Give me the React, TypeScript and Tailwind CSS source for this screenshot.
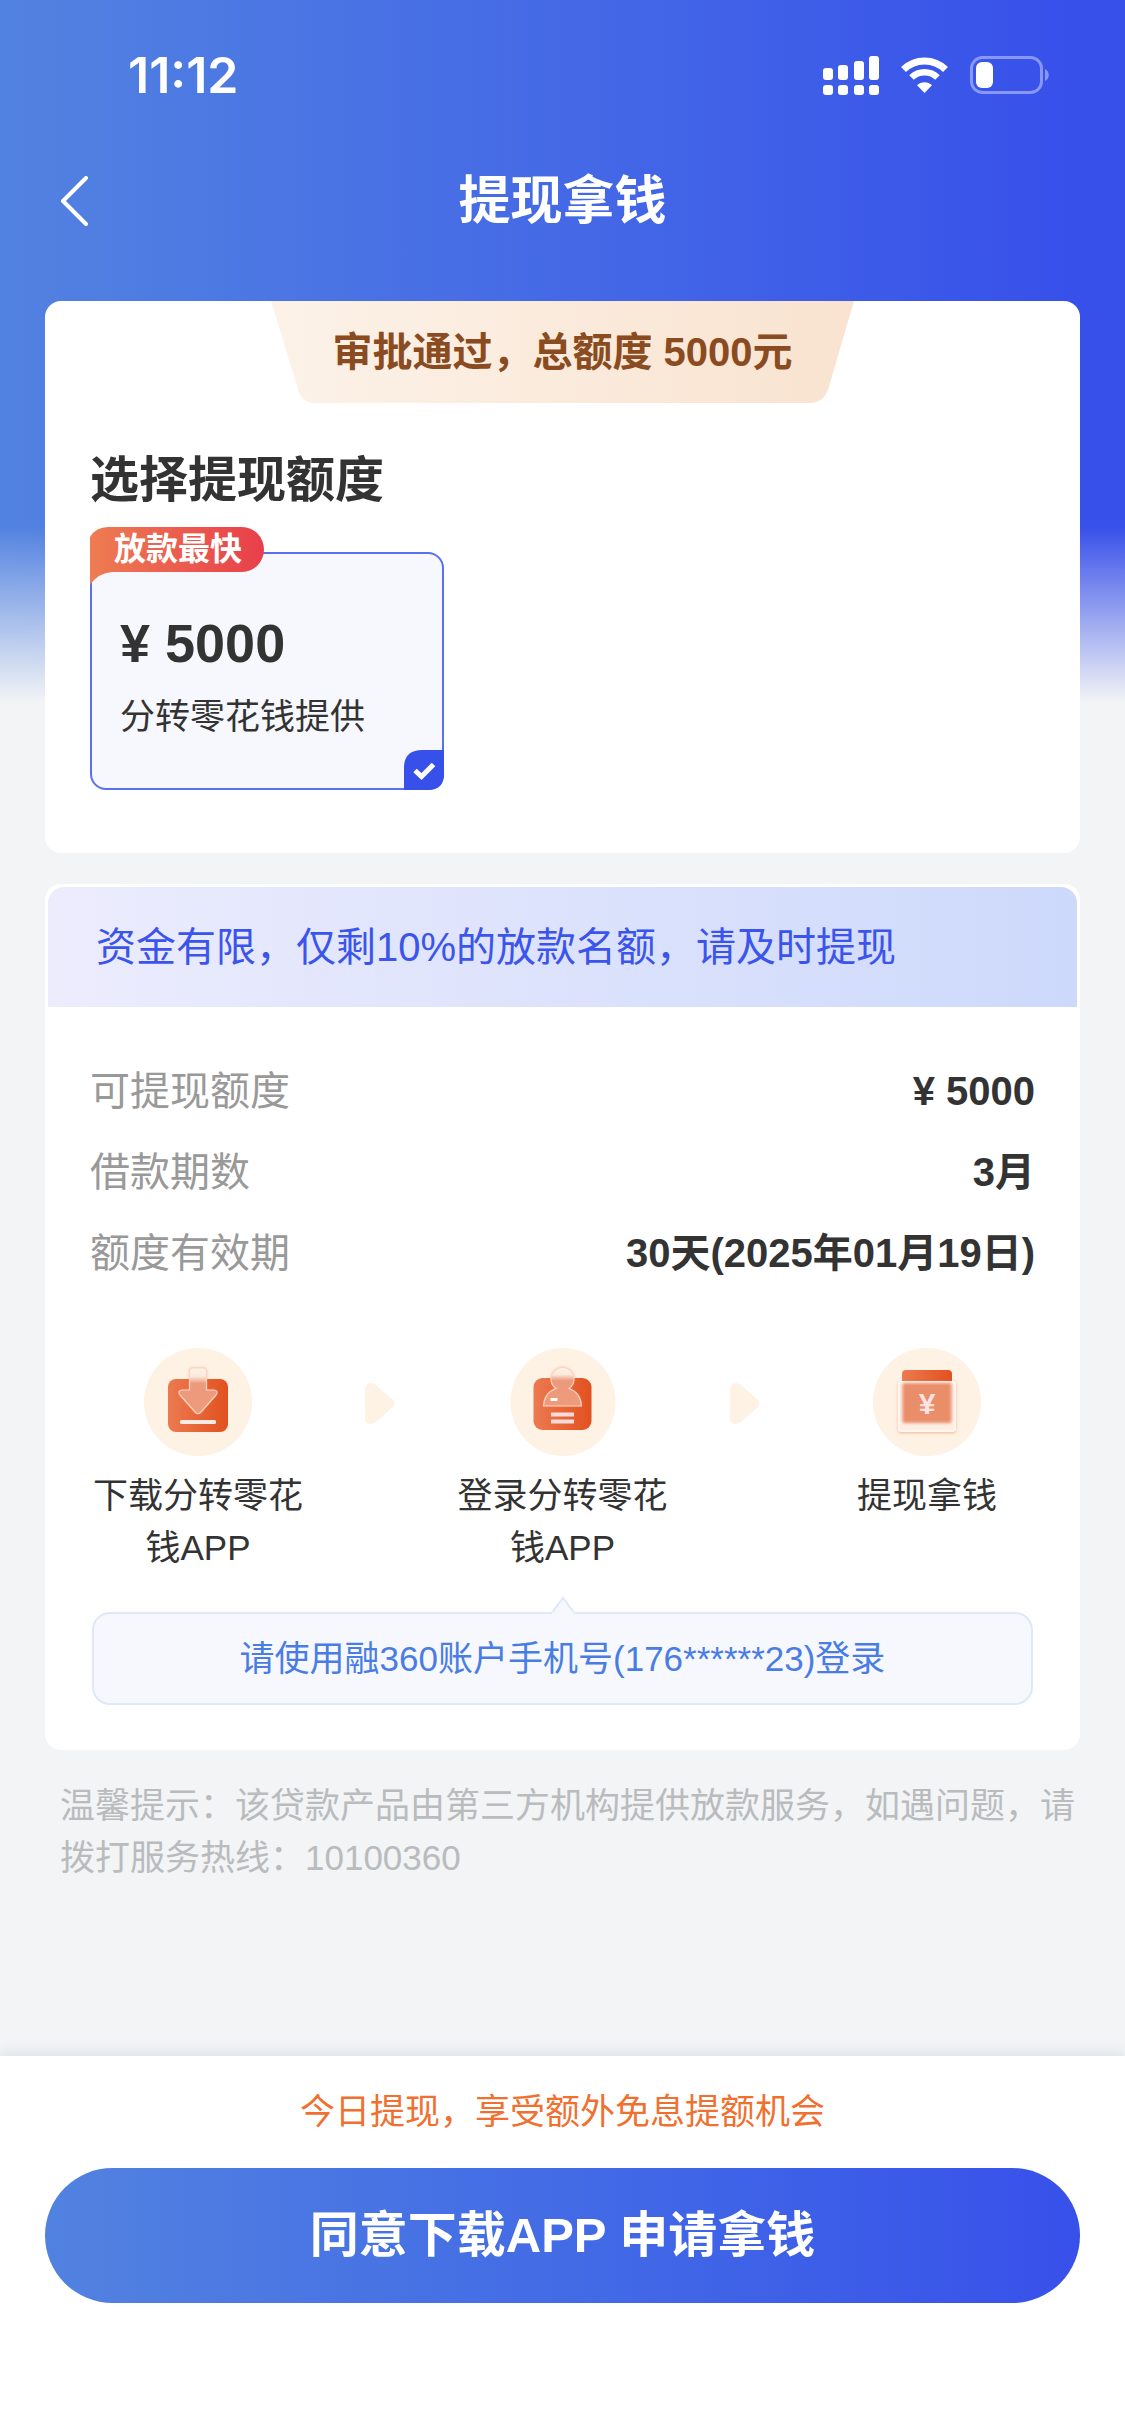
import { useState } from "react";
import { twMerge } from "tailwind-merge";

const details = [
  { label: "可提现额度", value: "¥ 5000" },
  { label: "借款期数", value: "3月" },
  { label: "额度有效期", value: "30天(2025年01月19日)" },
];

const SignalIcon = () => (
  <svg width="56" height="39" viewBox="0 0 56 39" fill="#fff">
    <rect x="0" y="12" width="10" height="12" rx="3" />
    <rect x="15" y="9" width="10" height="15" rx="3" />
    <rect x="31" y="5" width="10" height="19" rx="3" />
    <rect x="46" y="0" width="10" height="24" rx="3" />
    <rect x="0" y="29" width="10" height="10" rx="3" />
    <rect x="15" y="29" width="10" height="10" rx="3" />
    <rect x="31" y="29" width="10" height="10" rx="3" />
    <rect x="46" y="29" width="10" height="10" rx="3" />
  </svg>
);

const WifiIcon = () => (
  <svg width="49" height="36" viewBox="0 0 49 36">
    <path d="M3.5 12.5a30 30 0 0 1 42 0" fill="none" stroke="#fff" strokeWidth="7" />
    <path d="M11.5 20.5a18.5 18.5 0 0 1 26 0" fill="none" stroke="#fff" strokeWidth="6.5" />
    <path d="M17 28.3a10.6 10.6 0 0 1 15 0L24.5 36Z" fill="#fff" />
  </svg>
);

const BatteryIcon = () => (
  <svg width="80" height="38" viewBox="0 0 80 38">
    <rect x="1.5" y="1.5" width="70" height="35" rx="11" fill="none" stroke="#fff" strokeOpacity=".4" strokeWidth="3" />
    <rect x="6" y="6" width="17" height="26" rx="6" fill="#fff" />
    <path d="M75 13c5 2 5 10 0 12Z" fill="#fff" fillOpacity=".4" />
  </svg>
);

const IconDefs = () => (
  <svg width="0" height="0" className="absolute" aria-hidden="true">
    <defs>
      <linearGradient id="orange" x1="0" y1="0" x2="1" y2="0">
        <stop offset="0" stopColor="#ec7a50" />
        <stop offset="1" stopColor="#e2511f" />
      </linearGradient>
      <linearGradient id="glass" x1="0" y1="0" x2="0" y2="1">
        <stop offset="0" stopColor="#fdf3e6" />
        <stop offset=".18" stopColor="#fbeadd" />
        <stop offset=".34" stopColor="#ec9a7c" />
        <stop offset="1" stopColor="#ee9b7b" />
      </linearGradient>
      <filter id="soft" x="-20%" y="-20%" width="140%" height="140%">
        <feGaussianBlur stdDeviation="1.5" />
      </filter>
    </defs>
  </svg>
);

const DownloadIcon = () => {
  const arrow =
    "M48.500 20H59.500Q62.500 20 62.500 23V42H70Q75 43 72 47L57 64Q54 67.500 51 64L36 47Q33 43 38 42H45.500V23Q45.500 20 48.500 20Z";
  return (
    <svg width="108" height="108" viewBox="0 0 108 108">
      <circle cx="54" cy="54" r="54" fill="#fdf2e4" />
      <rect x="24" y="31" width="60" height="53" rx="8" fill="url(#orange)" />
      <path d={arrow} fill="#f08a68" opacity=".6" filter="url(#soft)" />
      <path d={arrow} fill="url(#glass)" stroke="#fbd3c3" strokeWidth="1.200" />
      <rect x="36" y="72" width="36" height="4" rx="1.500" fill="#fdeae4" />
    </svg>
  );
};

const LoginIcon = () => {
  const person =
    "M47 40.500A11.500 11.500 0 1 1 60 40.500C67 43 72 49 72.500 58H34.500C35 49 40 43 47 40.500Z";
  return (
    <svg width="108" height="108" viewBox="0 0 108 108">
      <ellipse cx="54" cy="54" rx="52.500" ry="54" fill="#fdf2e4" />
      <rect x="24.500" y="30" width="58" height="52" rx="9" fill="url(#orange)" />
      <path d={person} fill="#f08a68" opacity=".6" filter="url(#soft)" />
      <path d={person} fill="url(#glass)" stroke="#fbd3c3" strokeWidth="1.200" />
      <rect x="41.500" y="50" width="7" height="3" rx=".5" fill="#fff" />
      <rect x="42" y="64.500" width="23" height="4" rx=".5" fill="#fbdbdc" />
      <rect x="42" y="71.500" width="23" height="4" rx=".5" fill="#fbdbdc" />
    </svg>
  );
};

const CashIcon = () => (
  <svg width="108" height="108" viewBox="0 0 108 108">
    <circle cx="54" cy="54" r="54" fill="#fdf2e4" />
    <path d="M29 34V26Q29 22 33 22H75Q79 22 79 26V34Z" fill="url(#orange)" />
    <rect x="25" y="34" width="58" height="51" rx="3" fill="#f08a68" opacity=".6" filter="url(#soft)" />
    <rect x="26" y="34" width="56" height="49" rx="2" fill="#fdeee4" stroke="#fff6f0" strokeWidth="2" />
    <rect x="29.500" y="35" width="49" height="40" rx="2" fill="#ea8e6a" filter="url(#soft)" />
    <text x="54" y="66" textAnchor="middle" fontSize="30" fontWeight="700" fill="#fde3e3" fontFamily="Liberation Sans, sans-serif">
      ¥
    </text>
  </svg>
);

const StepArrow = () => (
  <svg className="mt-[35px] shrink-0" width="30" height="41" viewBox="0 0 30 41">
    <path d="M0 6Q0 0 6 0Q9 0 12 3L28 17Q31 20.500 28 24L12 38Q9 41 6 41Q0 41 0 35Z" fill="#fdf2e4" />
  </svg>
);

const Step = ({ icon, title }: { icon: React.ReactNode; title: string }) => (
  <li className="flex w-[216px] flex-col items-center">
    {icon}
    <span className="mt-[14px] text-center text-[35px] leading-[52px]">
      {title}
    </span>
  </li>
);

const App = () => {
  const [selected, setSelected] = useState(true);

  return (
    <div className="relative isolate flex min-h-screen flex-col bg-[#f2f4f6] font-['Liberation_Sans','Noto_Sans_CJK_SC',sans-serif] text-[#333]">
      <IconDefs />
      <div className="absolute inset-x-0 top-0 -z-10 h-[702px] bg-linear-to-r from-[#5282e0] via-[#4569e6] via-50% to-[#3850ea] to-95%">
        <div className="h-full bg-linear-to-b from-[#f2f4f6]/0 from-75% to-[#f2f4f6]" />
      </div>

      {/* Status bar */}
      <div className="flex h-[150px] items-center justify-between pr-[75px] pl-[128px] text-white">
        <span className="font-['Inter',sans-serif] text-[50px] font-semibold">
          11:12
        </span>
        <div className="flex items-center gap-[21px]">
          <SignalIcon />
          <WifiIcon />
          <BatteryIcon />
        </div>
      </div>

      <header className="grid h-[102px] grid-cols-[1fr_auto_1fr] items-center px-[59px] text-white">
        <button type="button" aria-label="返回" className="w-fit">
          <svg width="30" height="50" viewBox="0 0 30 50">
            <path d="M27 2L4 25L27 48" fill="none" stroke="#fff" strokeWidth="4" strokeLinecap="round" strokeLinejoin="round" />
          </svg>
        </button>
        <h1 className="text-[52px] font-bold">提现拿钱</h1>
      </header>

      <main className="px-[45px] pt-[49px]">
        <section className="rounded-2xl bg-white px-[45px] pb-[63px]">
          <div className="relative isolate mx-auto flex h-[102px] w-[583px] items-center justify-center">
            <svg className="absolute inset-0 -z-10 size-full" viewBox="0 0 583 101" preserveAspectRatio="none">
              <defs>
                <linearGradient id="ribbon">
                  <stop offset="0" stopColor="#fcf2e8" />
                  <stop offset="1" stopColor="#f9e3d0" />
                </linearGradient>
              </defs>
              <path d="M0 0H583L557 88Q552 101 540 101H43Q31 101 27 88Z" fill="url(#ribbon)" />
            </svg>
            <p className="text-[40px] font-bold text-[#8a4b20]">
              审批通过，总额度 5000元
            </p>
          </div>

          <h2 className="mt-[42px] text-[49px] leading-[70px] font-bold">
            选择提现额度
          </h2>

          <label className="relative mt-3 block w-fit pt-[25px]">
            <input
              type="radio"
              name="amount"
              className="sr-only"
              checked={selected}
              onChange={() => setSelected(true)}
            />
            <div
              className={twMerge(
                "w-[354px] rounded-2xl border-2 bg-[#f6f8fd] px-7 pt-[57px] pb-[45px]",
                selected && "border-[#5a70f2]"
              )}
            >
              <p className="text-[54px] leading-[64px] font-bold">¥ 5000</p>
              <p className="mt-4 text-[35px] leading-[52px]">分转零花钱提供</p>
            </div>
            <div className="absolute top-0 left-0 isolate h-[58px] w-[174px]">
              <svg className="absolute inset-0 -z-10" width="174" height="58" viewBox="0 0 174 58">
                <defs>
                  <linearGradient id="hot">
                    <stop offset="0" stopColor="#ee7c52" />
                    <stop offset="1" stopColor="#e83f4b" />
                  </linearGradient>
                </defs>
                <path d="M0 10Q6 0 18 0H152A22 22.500 0 0 1 152 45H22Q8 46 0 58Z" fill="url(#hot)" />
              </svg>
              <span className="block pl-6 text-[32px] leading-[45px] font-bold text-white">
                放款最快
              </span>
            </div>
            {selected && (
              <svg className="absolute right-0 bottom-0" width="40" height="40" viewBox="0 0 40 40">
                <path d="M0 18Q0 0 18 0H40V24Q40 40 24 40H0Z" fill="#3850ea" />
                <path d="M11 20.500L17.500 26.500L29.500 14.500" fill="none" stroke="#fff" strokeWidth="5" strokeLinejoin="miter" />
              </svg>
            )}
          </label>
        </section>

        <section className="mt-[31px] rounded-2xl bg-white p-[3px]">
          <p className="flex h-[120px] items-center rounded-t-2xl bg-linear-to-r from-[#ececfd] to-[#cdd9fb] px-12 text-[40px] text-[#3b54ec]">
            资金有限，仅剩10%的放款名额，请及时提现
          </p>

          <div className="px-[42px] pt-[43px] pb-[42px]">
            <dl>
              {details.map(({ label, value }) => (
                <div
                  key={label}
                  className="flex h-[81px] items-center justify-between text-[40px]"
                >
                  <dt className="text-[#999]">{label}</dt>
                  <dd className="font-bold">{value}</dd>
                </div>
              ))}
            </dl>

            <ol className="mt-[55px] flex items-start justify-between">
              <Step icon={<DownloadIcon />} title="下载分转零花钱APP" />
              <StepArrow />
              <Step icon={<LoginIcon />} title="登录分转零花钱APP" />
              <StepArrow />
              <Step icon={<CashIcon />} title="提现拿钱" />
            </ol>

            <div className="relative mx-0.5 mt-[38px] rounded-[18px] border-2 border-[#dfe8f8] bg-[#f6f8fd] py-[18px] text-center text-[35px] leading-[53px] text-[#4a7de4]">
              <svg className="absolute -top-[18px] left-1/2 -translate-x-1/2" width="26" height="19" viewBox="0 0 26 19">
                <path d="M1 18L13 2L25 18" fill="#f6f8fd" stroke="#dfe8f8" strokeWidth="2" />
                <path d="M2 18H24" stroke="#f6f8fd" strokeWidth="3" />
              </svg>
              请使用融360账户手机号(176******23)登录
            </div>
          </div>
        </section>
      </main>

      <p className="mt-[30px] mb-8 pr-11 pl-[60px] text-[35px] leading-[52px] text-[#b9bbbd]">
        温馨提示：该贷款产品由第三方机构提供放款服务，如遇问题，请拨打服务热线：10100360
      </p>

      <footer className="mt-auto bg-white px-[45px] pt-[30px] pb-[132px] text-center shadow-[0_-4px_12px_rgba(60,70,100,0.1)]">
        <p className="text-[35px] leading-[52px] text-[#f0702f]">
          今日提现，享受额外免息提额机会
        </p>
        <button
          type="button"
          className="mt-[30px] h-[135px] w-full rounded-full bg-linear-to-r from-[#5282e0] to-[#3850ea] text-[49px] font-bold text-white"
        >
          同意下载APP 申请拿钱
        </button>
      </footer>
    </div>
  );
};

export default App;
